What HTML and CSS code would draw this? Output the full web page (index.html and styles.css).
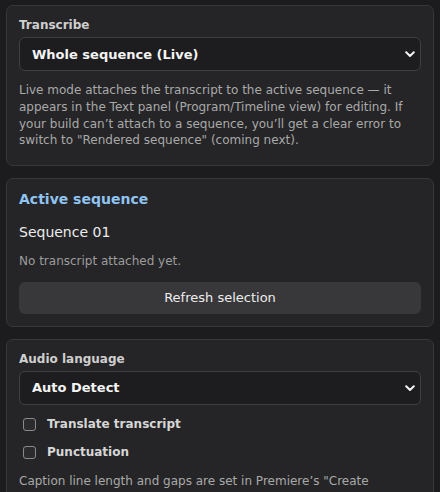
FILE: index.html
```html
<!DOCTYPE html>
<html lang="en">
<head>
<meta charset="utf-8">
<title>Transcribe</title>
<link rel="stylesheet" href="styles.css">
</head>
<body>
<main class="panel">
  <section class="card">
    <label class="field-label" for="mode">Transcribe</label>
    <div class="select-wrap">
      <select id="mode" class="select">
        <option>Whole sequence (Live)</option>
        <option>Rendered sequence</option>
      </select>
      <svg class="chevron" width="10" height="7" viewBox="0 0 10 7"><path d="M1.2 1.2 L5 5 L8.8 1.2" fill="none" stroke="#f2f2f2" stroke-width="2" stroke-linecap="round" stroke-linejoin="round"/></svg>
    </div>
    <p class="help help-first">Live mode attaches the transcript to the active sequence — it appears in the Text panel (Program/Timeline view) for editing. If your build can’t attach to a sequence, you’ll get a clear error to switch to "Rendered sequence" (coming next).</p>
  </section>

  <section class="card card-seq">
    <h2 class="card-title">Active sequence</h2>
    <div class="seq-name">Sequence 01</div>
    <div class="muted">No transcript attached yet.</div>
    <button class="btn" type="button">Refresh selection</button>
  </section>

  <section class="card">
    <label class="field-label" for="lang">Audio language</label>
    <div class="select-wrap">
      <select id="lang" class="select">
        <option>Auto Detect</option>
        <option>English</option>
      </select>
      <svg class="chevron" width="10" height="7" viewBox="0 0 10 7"><path d="M1.2 1.2 L5 5 L8.8 1.2" fill="none" stroke="#f2f2f2" stroke-width="2" stroke-linecap="round" stroke-linejoin="round"/></svg>
    </div>
    <label class="check-row"><input type="checkbox" class="check"><span>Translate transcript</span></label>
    <label class="check-row"><input type="checkbox" class="check"><span>Punctuation</span></label>
    <p class="help help-caption">Caption line length and gaps are set in Premiere’s "Create Captions" dialog when you convert the transcript into captions on the timeline.</p>
  </section>
</main>
</body>
</html>
```

FILE: styles.css
```css
html, body {
  margin: 0;
  padding: 0;
  background: #1c1c1e;
  color: #e8e8e8;
  font-family: "DejaVu Sans", Verdana, sans-serif;
  overflow: hidden;
}

.panel {
  padding: 5px 6px;
  display: flex;
  flex-direction: column;
  gap: 12px;
}

.card {
  background: #252527;
  border: 1px solid #38383b;
  border-radius: 7px;
  padding: 12px 12px 11px;
  display: flex;
  flex-direction: column;
}

.card-seq {
  padding-bottom: 12px;
}

.field-label {
  font-size: 12px;
  font-weight: bold;
  line-height: 15px;
  color: #cfcfcf;
  margin-bottom: 4px;
}

.select-wrap {
  position: relative;
}

.select {
  appearance: none;
  -webkit-appearance: none;
  display: block;
  width: 100%;
  height: 34px;
  box-sizing: border-box;
  background: #1d1d1f;
  border: 1px solid #3f3f42;
  border-radius: 6px;
  color: #f4f4f4;
  font-family: "DejaVu Sans", Verdana, sans-serif;
  font-size: 13px;
  font-weight: bold;
  padding: 0 30px 0 12px;
  outline: none;
}

.chevron {
  position: absolute;
  right: 6px;
  top: 14px;
  pointer-events: none;
}

.help {
  margin: 0;
  font-size: 12px;
  line-height: 16.8px;
  color: #a9a9a9;
}

.help-first {
  margin-top: 11px;
  margin-bottom: 5px;
}

.help-caption {
  margin-top: 12px;
}

.card-title {
  margin: 0;
  font-size: 14px;
  font-weight: bold;
  line-height: 17px;
  color: #8fc3f2;
}

.seq-name {
  margin-top: 15px;
  font-size: 14px;
  line-height: 18px;
  color: #ececec;
}

.muted {
  margin-top: 12px;
  font-size: 12px;
  line-height: 16.5px;
  color: #9c9c9c;
}

.btn {
  margin-top: 12px;
  height: 32px;
  width: 100%;
  border: none;
  border-radius: 6px;
  background: #38383b;
  color: #ededed;
  font-family: "DejaVu Sans", Verdana, sans-serif;
  font-size: 13px;
  cursor: pointer;
}

.check-row {
  display: flex;
  align-items: center;
  gap: 11px;
  margin-top: 11.5px;
  font-size: 12px;
  font-weight: bold;
  line-height: 16.6px;
  color: #d6d6d6;
}

.check {
  appearance: none;
  -webkit-appearance: none;
  width: 13px;
  height: 13px;
  margin: 0 0 0 4px;
  box-sizing: border-box;
  border: 1px solid #8a8a8a;
  border-radius: 3px;
  background: #2b2b2d;
  flex: none;
}
```
